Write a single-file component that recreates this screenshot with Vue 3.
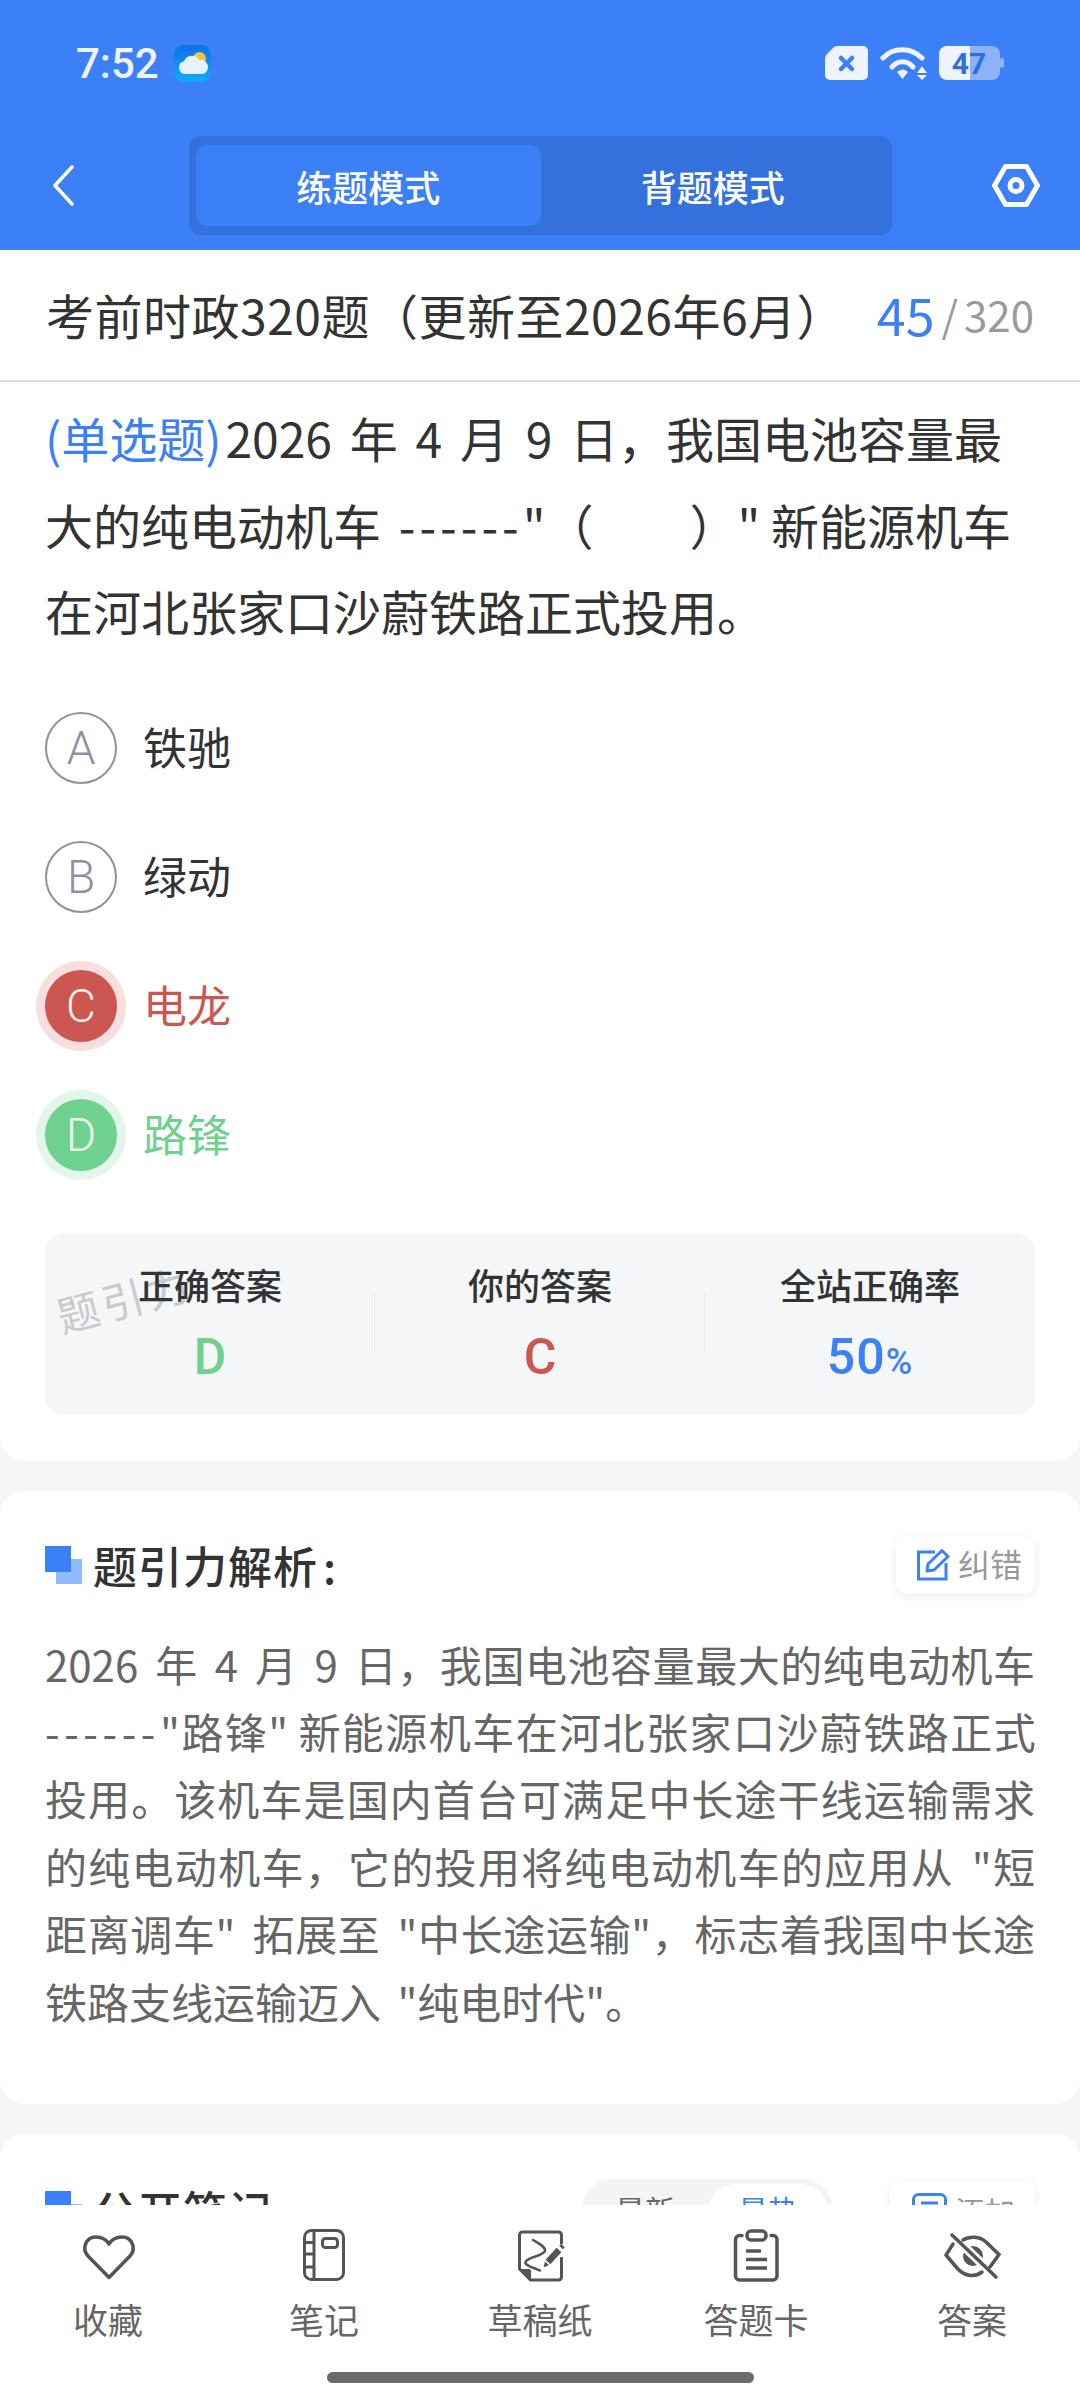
<script setup>
const options = [
  { key: "A", text: "铁驰", state: "" },
  { key: "B", text: "绿动", state: "" },
  { key: "C", text: "电龙", state: "wrong" },
  { key: "D", text: "路锋", state: "right" }
];
</script>

<template>
  <div class="page">
    <header class="top">
      <div class="status">
        <div class="status-left">
          <span class="time">7:52</span>
          <svg class="weather" width="37" height="37" viewBox="0 0 37 37">
            <defs>
              <linearGradient id="sky" x1="0" y1="0" x2="0" y2="1">
                <stop offset="0" stop-color="#0d6fe8" />
                <stop offset="1" stop-color="#12abff" />
              </linearGradient>
            </defs>
            <rect width="37" height="37" rx="10" fill="url(#sky)" />
            <circle cx="25.5" cy="13.5" r="6.5" fill="#f7c244" />
            <path d="M11 29 a6.5 6.5 0 0 1 -1 -12.8 a8.5 8.5 0 0 1 15.5 -1 a7 7 0 0 1 3 13.8 z" fill="#e6f3fd" />
          </svg>
        </div>
        <div class="status-right">
          <svg width="43" height="34" viewBox="0 0 43 34">
            <path d="M13 0H38a5 5 0 0 1 5 5V29a5 5 0 0 1-5 5H5a5 5 0 0 1-5-5V13q0-3 2-5l7-7q1.500-1 4-1z" fill="#eef3fe" />
            <path d="M16 12L27 23M27 12L16 23" stroke="#3b80f7" stroke-width="4.500" stroke-linecap="round" />
          </svg>
          <svg width="47" height="34" viewBox="0 0 47 34">
            <path d="M3 12C13 1 31 1 42 12" fill="none" stroke="#eef3fe" stroke-width="5" stroke-linecap="round" />
            <path d="M12 21C18 14 27 14 33 21" fill="none" stroke="#eef3fe" stroke-width="5" stroke-linecap="round" />
            <path d="M17 26Q22.500 21 28 26L22.500 33z" fill="#eef3fe" />
            <path d="M42 20L47 27H37zM37 29H47L42 34z" fill="#eef3fe" />
          </svg>
          <svg width="65" height="34" viewBox="0 0 65 34">
            <path d="M31 0H53a8 8 0 0 1 8 8V26a8 8 0 0 1-8 8H31z" fill="#8cb3fa" />
            <rect x="61" y="12" width="4" height="10" rx="2" fill="#8cb3fa" />
            <path d="M31 0H8a8 8 0 0 0-8 8V26a8 8 0 0 0 8 8H31z" fill="#eef3fe" />
            <text x="30" y="28" text-anchor="middle" class="batt">47</text>
          </svg>
        </div>
      </div>
      <div class="toolbar">
        <svg class="back" width="22" height="41" viewBox="0 0 22 41">
          <path d="M20 2L3 20.500L20 39" fill="none" stroke="#fff" stroke-width="3.500" stroke-linecap="round" stroke-linejoin="round" />
        </svg>
        <div class="tabs">
          <div class="tab active">练题模式</div>
          <div class="tab">背题模式</div>
        </div>
        <svg class="hex" width="48" height="43" viewBox="0 0 48 43">
          <path d="M2.500 21.500L13.500 2.500H34.500L45.500 21.500L34.500 40.500H13.500z" fill="none" stroke="#fff" stroke-width="5" stroke-linejoin="round" />
          <circle cx="24" cy="21.500" r="6" fill="none" stroke="#fff" stroke-width="5" />
        </svg>
      </div>
    </header>

    <main class="main">
      <section class="card question-card">
        <div class="title-row">
          <span class="title">考前时政320题（更新至2026年6月）</span>
          <span class="progress"><b>45</b><i>/</i><em>320</em></span>
        </div>
        <div class="question-body">
          <p class="question"><span class="q-type">(单选题)</span>2026 年 4 月 9 日，我国电池容量最大的纯电动机车 <span class="dash">------</span>"（&emsp;&emsp;）"<span class="thin-space">&nbsp;</span>新能源机车在河北张家口沙蔚铁路正式投用。</p>
          <ul class="options">
            <li v-for="opt in options" :key="opt.key" class="option" :class="opt.state">
              <span class="letter">{{ opt.key }}</span>
              <span class="opt-text">{{ opt.text }}</span>
            </li>
          </ul>
          <div class="stats">
            <span class="watermark">题引力</span>
            <div class="stat">
              <span class="stat-label">正确答案</span>
              <span class="stat-value green">D</span>
            </div>
            <div class="stat">
              <span class="stat-label">你的答案</span>
              <span class="stat-value red">C</span>
            </div>
            <div class="stat">
              <span class="stat-label">全站正确率</span>
              <span class="stat-value blue">50<small>%</small></span>
            </div>
          </div>
        </div>
      </section>

      <section class="card panel">
        <div class="panel-head">
          <h2 class="panel-title"><span class="bullet"></span>题引力解析<span class="colon">:</span></h2>
          <div class="small-btn">
            <svg width="34" height="33" viewBox="0 0 34 33">
              <path d="M19 4H2.500V31H30V15" fill="none" stroke="#3b80f7" stroke-width="3" />
              <path d="M11 23L12 16L26 2.500L32 8.500L18 22z" fill="none" stroke="#3b80f7" stroke-width="3" stroke-linejoin="round" />
            </svg>
            <span class="btn-text">纠错</span>
          </div>
        </div>
        <p class="analysis">
          <span class="ln">2026 年 4 月 9 日，我国电池容量最大的纯电动机车</span>
          <span class="ln tight"><span class="dash-sm">------</span>"路锋" 新能源机车在河北张家口沙蔚铁路正式</span>
          <span class="ln">投用。该机车是国内首台可满足中长途干线运输需求</span>
          <span class="ln">的纯电动机车，它的投用将纯电动机车的应用从 "短</span>
          <span class="ln">距离调车" 拓展至 "中长途运输"，标志着我国中长途</span>
          <span class="ln last">铁路支线运输迈入 "纯电时代"。</span>
        </p>
      </section>

      <section class="card panel">
        <div class="panel-head notes-head">
          <h2 class="panel-title"><span class="bullet"></span>公开笔记<span class="colon">:</span></h2>
          <div class="segment">
            <span class="seg">最新</span>
            <span class="seg on">最热</span>
          </div>
          <div class="small-btn add-btn">
            <svg width="35" height="33" viewBox="0 0 35 33">
              <rect x="1.500" y="1.500" width="32" height="30" rx="5" fill="none" stroke="#3b80f7" stroke-width="3" />
              <path d="M9 10H26" stroke="#3b80f7" stroke-width="3" />
            </svg>
            <span>添加</span>
          </div>
        </div>
      </section>
    </main>

    <nav class="nav">
      <div class="nav-items">
        <div class="nav-item">
          <svg width="60" height="60" viewBox="0 0 60 60" fill="none" stroke="#555" stroke-width="3.500" stroke-linejoin="round">
            <path d="M31 51.500L10 30C3.500 23 7.500 11 18 11C24 11 28.500 14 31 18C33.500 14 38 11 44 11C54.500 11 58.500 23 52 30z" />
          </svg>
          <span>收藏</span>
        </div>
        <div class="nav-item">
          <svg width="60" height="60" viewBox="0 0 60 60" fill="none" stroke="#555" stroke-width="3">
            <rect x="10.500" y="4.500" width="39" height="49" rx="7" />
            <path d="M20 4.500V53.500M10.500 16.500H20M10.500 28H20M10.500 41H20" />
            <rect x="28.500" y="12.500" width="15" height="9" rx="3" />
          </svg>
          <span>笔记</span>
        </div>
        <div class="nav-item">
          <svg width="60" height="60" viewBox="0 0 60 60" fill="none" stroke="#555" stroke-width="3">
            <path d="M51.500 18V9a3 3 0 0 0-3-3H12.500a3 3 0 0 0-3 3V43L20.500 54H48.500a3 3 0 0 0 3-3V31" />
            <path d="M9.500 43H19a2 2 0 0 1 2 2V54z" fill="#555" stroke="none" />
            <path d="M23 14C28 17 36 21 35 25C33 30 18 31 15.500 36C14 39 24 42 30 44.500" stroke-width="2.500" stroke-linecap="round" />
            <path d="M38 36L49 24" stroke-width="6.500" />
            <path d="M51 21.500L53 19.500" stroke-width="5" />
            <path d="M33.500 41.500L35 35.500L39 39z" fill="#555" stroke="none" />
          </svg>
          <span>草稿纸</span>
        </div>
        <div class="nav-item">
          <svg width="60" height="60" viewBox="0 0 60 60" fill="none" stroke="#555" stroke-width="3.500" stroke-linecap="round">
            <path d="M16 9.500H13.500a4 4 0 0 0-4 4V50a4 4 0 0 0 4 4H47a4 4 0 0 0 4-4V13.500a4 4 0 0 0-4-4H45" />
            <rect x="21" y="5" width="19" height="9" rx="4" />
            <path d="M20 25H35M20 33.500H41M20 42H41" stroke-linecap="butt" />
          </svg>
          <span>答题卡</span>
        </div>
        <div class="nav-item">
          <svg width="60" height="60" viewBox="0 0 60 60" fill="none" stroke="#555" stroke-width="3.500" stroke-linecap="round">
            <circle cx="31" cy="30" r="10" fill="#555" stroke="none" />
            <path d="M10 9L54 51" stroke="#fff" stroke-width="9" />
            <path d="M21 14C27 10 38 10 44 16L57 28.500L48 41" />
            <path d="M11 18L4 29L15 42C22 50 32 52 40 46" />
            <path d="M10 9L54 51" />
          </svg>
          <span>答案</span>
        </div>
      </div>
      <div class="home-bar"></div>
    </nav>
  </div>
</template>

<style>
html, body {
  margin: 0;
  background: #fff;
}
</style>

<style scoped>
.page {
  width: 1080px;
  height: 2400px;
  display: flex;
  flex-direction: column;
  overflow: hidden;
  background: #f4f6f8;
  font-family: "Noto Sans CJK SC", "Noto Sans", sans-serif;
  color: #333;
}
.top {
  height: 250px;
  flex: none;
  background: #3b80f7;
}
.status {
  height: 136px;
  box-sizing: border-box;
  padding: 45px 76px 0 76px;
  display: flex;
  justify-content: space-between;
  align-items: flex-start;
}
.status-left {
  display: flex;
  align-items: center;
  height: 37px;
  gap: 15px;
}
.time {
  font: 500 42px/37px Roboto, sans-serif;
  color: #eef3fe;
}
.status-right {
  display: flex;
  gap: 12px;
  padding-top: 1px;
}
.batt {
  font: 700 30px Roboto, sans-serif;
  fill: #3070dd;
}
.toolbar {
  position: relative;
  height: 99px;
  display: flex;
  align-items: center;
  padding: 0 40px 0 52px;
}
.back {
  flex: none;
}
.tabs {
  margin-left: 115px;
  width: 703px;
  height: 99px;
  box-sizing: border-box;
  padding: 9px 7px;
  display: flex;
  flex: none;
  background: #3571dc;
  border-radius: 12px;
}
.tab {
  flex: 1;
  display: flex;
  align-items: center;
  justify-content: center;
  font-size: 36px;
  font-weight: 500;
  color: #fff;
  border-radius: 12px;
}
.tab.active {
  background: #3b80f7;
}
.hex {
  margin-left: auto;
}
.main {
  flex: 1;
  min-height: 0;
  overflow: hidden;
  display: flex;
  flex-direction: column;
  gap: 30px;
}
.card {
  background: #fff;
  flex: none;
}
.question-card {
  border-radius: 0 0 24px 24px;
  padding-bottom: 46px;
}
.title-row {
  height: 132px;
  box-sizing: border-box;
  border-bottom: 2px solid #ddd;
  padding: 0 46px 3px;
  display: flex;
  align-items: center;
  justify-content: space-between;
}
.title {
  font-size: 48px;
  letter-spacing: 0.5px;
  white-space: nowrap;
}
.progress {
  display: flex;
  align-items: center;
  color: #9a9a9a;
  font-size: 42px;
  line-height: 60px;
}
.progress b {
  font-weight: 400;
  font-size: 52px;
  color: #3b80f7;
}
.progress i {
  font-style: normal;
  margin: 0 6px 0 7px;
}
.progress em {
  font-style: normal;
}
.question-body {
  padding: 12px 45px 0;
}
.question {
  margin: 0;
  font-size: 48px;
  line-height: 86.5px;
  word-spacing: 7px;
}
.q-type {
  color: #3b80f7;
  margin-right: 4px;
}
.dash {
  letter-spacing: 4px;
  white-space: nowrap;
}
.thin-space {
  word-spacing: 0;
}
.options {
  list-style: none;
  margin: 58px 0 0;
  padding: 0;
  display: flex;
  flex-direction: column;
  gap: 57px;
}
.option {
  display: flex;
  align-items: center;
  height: 72px;
  gap: 26px;
}
.letter {
  width: 72px;
  height: 72px;
  box-sizing: border-box;
  border: 2px solid #8d91a3;
  border-radius: 50%;
  display: flex;
  align-items: center;
  justify-content: center;
  font: 300 46px Roboto, sans-serif;
  color: #8d91a3;
}
.opt-text {
  font-size: 44px;
  padding-bottom: 3px;
}
.option.wrong .letter {
  background: #cc5650;
  border-color: #cc5650;
  color: #fbeeee;
  box-shadow: 0 0 0 9px #f7dfde;
}
.option.wrong .opt-text {
  color: #cc5650;
}
.option.right .letter {
  background: #6fd18e;
  border-color: #6fd18e;
  color: #effaf2;
  box-shadow: 0 0 0 9px #e3f6e9;
}
.option.right .opt-text {
  color: #6fd18e;
}
.stats {
  position: relative;
  margin-top: 63px;
  height: 181px;
  background: #f4f6f8;
  border-radius: 18px;
  display: flex;
}
.watermark {
  position: absolute;
  left: 10px;
  top: 33px;
  font-size: 42px;
  letter-spacing: 4px;
  color: #c9cacc;
  transform: rotate(-15deg);
}
.stat {
  position: relative;
  flex: 1;
  display: flex;
  flex-direction: column;
  align-items: center;
}
.stat + .stat::before {
  content: "";
  position: absolute;
  left: -1px;
  top: 58px;
  height: 60px;
  width: 1px;
  background: #e8eaed;
}
.stat-label {
  margin-top: 23px;
  font-size: 36px;
  line-height: 54px;
  font-weight: 500;
}
.stat-value {
  margin-top: 19px;
  font: 500 50px/54px Roboto, sans-serif;
}
.stat-value small {
  font-size: 36px;
}
.green {
  color: #6fd18e;
}
.red {
  color: #cc5650;
}
.blue {
  color: #3b80f7;
  letter-spacing: 1px;
}
.panel {
  border-radius: 24px;
  padding: 45px 45px 70px;
}
.panel-head {
  display: flex;
  align-items: center;
  justify-content: space-between;
}
.panel-title {
  margin: 0;
  display: flex;
  align-items: center;
  font-size: 44px;
  line-height: 58px;
  letter-spacing: 1px;
  font-weight: 500;
  color: #333;
}
.colon {
  margin-left: 5px;
}
.bullet {
  position: relative;
  width: 37px;
  height: 38px;
  margin-right: 11px;
}
.bullet::after {
  content: "";
  position: absolute;
  right: 0;
  bottom: 0;
  width: 26px;
  height: 25px;
  background: #8fbafb;
}
.bullet::before {
  content: "";
  position: absolute;
  left: 0;
  top: 0;
  width: 26px;
  height: 26px;
  background: #3b80f7;
  z-index: 1;
}
.small-btn {
  height: 58px;
  box-sizing: border-box;
  padding: 0 13px 0 20px;
  display: flex;
  align-items: center;
  gap: 8px;
  background: #fff;
  border-radius: 12px;
  box-shadow: 0 2px 10px rgba(0, 0, 0, 0.08);
  font-size: 32px;
  color: #999;
}
.btn-text {
  padding-bottom: 4px;
}
.analysis {
  margin: 36px 0 0;
  font-size: 42px;
  line-height: 67.4px;
  word-spacing: 7px;
  color: #666;
}
.ln {
  display: block;
  text-align: justify;
  text-align-last: justify;
}
.ln.tight {
  letter-spacing: -0.7px;
  word-spacing: 0;
}
.ln.last {
  text-align-last: left;
}
.dash-sm {
  letter-spacing: 4.600px;
}
.notes-head {
  justify-content: flex-start;
}
.segment {
  margin-left: auto;
  width: 251px;
  height: 62px;
  box-sizing: border-box;
  padding: 5px 5px 0 0;
  display: flex;
  background: #f4f4f4;
  border-radius: 31px 31px 0 0;
}
.seg {
  flex: 1;
  display: flex;
  justify-content: center;
  font-size: 30px;
  line-height: 50px;
  color: #666;
}
.seg.on {
  flex: 0 0 120px;
  background: #fff;
  color: #3b80f7;
  border-radius: 28px;
}
.add-btn {
  margin-left: 57px;
  padding: 0 20px 0 22px;
  font-size: 30px;
}
.nav {
  flex: none;
  height: 195px;
  box-sizing: border-box;
  background: #fff;
  padding-top: 21px;
  display: flex;
  flex-direction: column;
  align-items: center;
}
.nav-items {
  align-self: stretch;
  display: flex;
}
.nav-item {
  flex: 1;
  display: flex;
  flex-direction: column;
  align-items: center;
  gap: 8px;
  font-size: 35px;
  line-height: 50px;
  color: #666;
}
.nav-item svg {
  display: block;
}
.home-bar {
  margin-top: 28px;
  width: 427px;
  height: 11px;
  border-radius: 6px;
  background: #6b6b6b;
}
</style>
